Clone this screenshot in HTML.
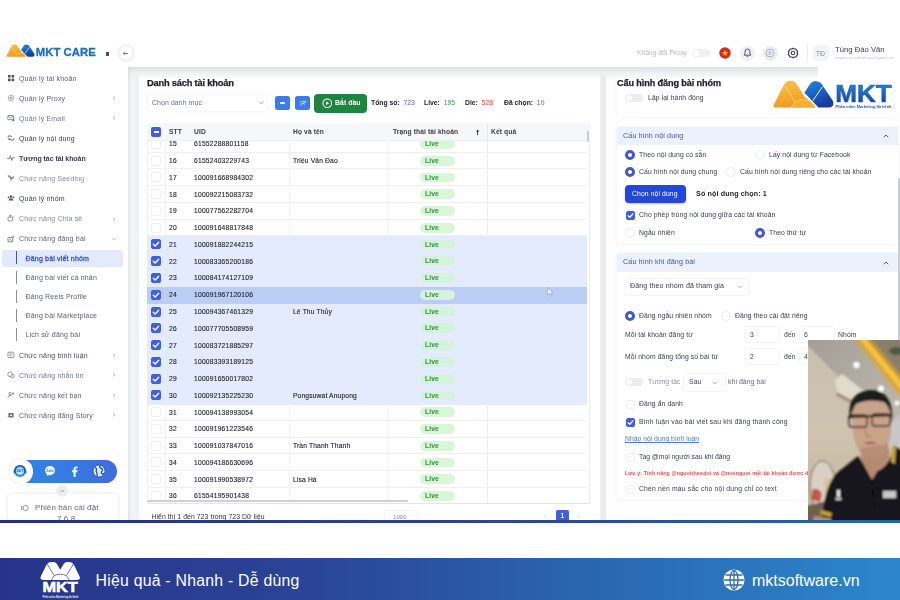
<!DOCTYPE html>
<html lang="vi">
<head>
<meta charset="utf-8">
<title>MKT Care</title>
<style>
*{box-sizing:border-box;margin:0;padding:0}
html,body{width:900px;height:600px;overflow:hidden;background:#fff;font-family:"Liberation Sans",sans-serif;color:#3a3f4a}
.abs,.app *{position:absolute}
.app{position:absolute;left:0;top:0;width:900px;height:521px;overflow:hidden;background:#f1f2f4;filter:blur(.45px)}
.t{white-space:nowrap;line-height:1;font-size:6.8px;letter-spacing:.1px;color:#3a3e48}
/* header */
.hdr{left:0;top:0;width:900px;height:67px;background:#fff}
.hshadow{left:128px;top:67px;width:772px;height:12px;background:linear-gradient(#dfe0e3,#eeeff1 45%,rgba(241,242,244,0))}
/* sidebar */
.side{left:0;top:0;width:128px;height:521px;background:#fff;box-shadow:1px 0 3px rgba(0,0,0,.08)}
.mi{left:19px;font-size:7px;letter-spacing:.18px;color:#555a66;white-space:nowrap;line-height:1}
.ic{left:7px;width:8px;height:8px}
.chev{left:112px;width:4px;height:4px}
.sub{left:25.5px;font-size:7px;letter-spacing:.18px;color:#5a5f6a;white-space:nowrap;line-height:1}
.vbar{left:16px;width:1px;background:#8b8f99}
/* cards */
.card{background:#fff;border-radius:3px}
.row{left:147px;width:439.5px;height:16.77px;border-bottom:1px solid #eef0f3}
.row.sel{background:#e4ebfd;border-bottom-color:#e4ebfd;height:17.3px}
.row.cur{background:#bacdf4;border-bottom-color:#bacdf4;height:17.3px}
.row span{position:absolute;white-space:nowrap;line-height:1;font-size:6.7px;letter-spacing:.22px;color:#23262e;top:5.5px;-webkit-text-stroke:.12px #23262e}
.row .cb{left:4px;top:3px;width:10px;height:10px;border:1px solid #eff0f3;border-radius:2px;background:#fff}
.row .cb.on{background:#3f5fe0;border-color:#3f5fe0}
.row .cb svg{left:-1px;top:-1px;width:10px;height:10px}
.row .c1{left:22px}
.row .c2{left:47px}
.row .c3{left:146px;letter-spacing:.15px}
.row .live{-webkit-text-stroke:0;left:273px;top:3.2px;width:35px;height:9.8px;border-radius:5px;background:#d9f7d6;color:#329040;text-align:left;padding-left:5px;font-size:6.8px;letter-spacing:.1px;line-height:9.8px;font-weight:bold}
.row.sel .live,.row.cur .live{background:#d5f3dc}
/* right */
.rad{width:10px;height:10px;border-radius:50%;border:1px solid #eceef2;background:#fff;margin:-.5px 0 0 -.5px}
.rad.on{border:3px solid #4358cc;background:#fff}
.cbx{width:9px;height:9px;border-radius:2px;border:1px solid #eceef2;background:#fff}
.cbx.on{background:#3f5fe0;border-color:#3f5fe0}
.cbx svg{left:-1px;top:-1px;width:9px;height:9px}
.inp{height:17px;border:1px solid #f4f5f7;border-radius:3px;background:#fff}
.tg{width:18px;height:8px;border-radius:4px;background:#ebecef}
.tg i{left:1px;top:1px;width:6px;height:6px;border-radius:50%;background:#fff}
/* footer */
.line{position:absolute;left:0;top:520px;width:900px;height:3px;background:linear-gradient(90deg,#25307c,#2a4a8c 60%,#2b66a6)}
.foot{position:absolute;left:0;top:558px;width:900px;height:42px;background:linear-gradient(90deg,#27348a 0%,#2a4597 35%,#2a66b0 65%,#2c86cc 100%)}
.foot .ft{position:absolute;color:#fff;font-size:15.5px;line-height:1;white-space:nowrap}
</style>
</head>
<body>
<div class="app">
<!-- left card -->
<div class="card" style="left:139px;top:72px;width:461px;height:460px"></div>
<div class="hshadow"></div>
<div class="t" style="left:147px;top:78.5px;font-size:9.3px;letter-spacing:-.2px;font-weight:bold;color:#1c1e24;-webkit-text-stroke:.25px #1c1e24">Danh sách tài khoản</div>
<div class="inp" style="left:147px;top:94px;width:121px;height:18px;border-color:#f8f8fa;box-shadow:0 0 2px rgba(0,0,0,.04)"></div>
<div class="t" style="left:152px;top:99.5px;font-size:6.9px;color:#6a6f7a">Chọn danh mục</div>
<svg style="left:258px;top:101px;width:6px;height:4px" viewBox="0 0 6 4"><path d="M.7.7 L3 3 L5.3.7" fill="none" stroke="#b4b7bf" stroke-width=".9"/></svg>
<div style="left:275px;top:96px;width:15px;height:14px;border-radius:2.5px;background:#3d7be6"></div>
<div style="left:280px;top:102px;width:5px;height:2px;border-radius:1px;background:#fff"></div>
<div style="left:295px;top:96px;width:15px;height:14px;border-radius:2.5px;background:#3d7be6"></div>
<svg style="left:298.5px;top:99px;width:8px;height:8px" viewBox="0 0 8 8"><path d="M1 3.2 Q4 .8 7 3.2 M2.2 5 Q4 3.6 5.8 5 M1.5 6.5 L6.5 2" fill="none" stroke="#dfe9ff" stroke-width=".8" stroke-linecap="round"/></svg>
<div style="left:314px;top:94px;width:53px;height:18.5px;border-radius:4px;background:#1e8540"></div>
<svg style="left:321.5px;top:98px;width:10.5px;height:10.5px" viewBox="0 0 9 9"><circle cx="4.5" cy="4.5" r="3.7" fill="none" stroke="#fff" stroke-width=".9"/><path d="M3.6 2.9 L6.2 4.5 L3.6 6.1Z" fill="#fff"/></svg>
<div class="t" style="left:335px;top:99.5px;color:#fff;font-weight:bold">Bắt đầu</div>
<div class="t" style="left:371px;top:99.5px;color:#23262e;font-weight:bold;letter-spacing:0">Tổng số: <span style="position:static;color:#4a63d8;font-weight:normal">&nbsp;723</span></div>
<div class="t" style="left:424px;top:99.5px;color:#23262e;font-weight:bold;letter-spacing:0">Live: <span style="position:static;color:#2a9a55;font-weight:normal">&nbsp;195</span></div>
<div class="t" style="left:465px;top:99.5px;color:#23262e;font-weight:bold;letter-spacing:0">Die: <span style="position:static;color:#e0423f;font-weight:normal">&nbsp;528</span></div>
<div class="t" style="left:504px;top:99.5px;color:#23262e;font-weight:bold;letter-spacing:0">Đã chọn: <span style="position:static;color:#4a63d8;font-weight:normal">&nbsp;10</span></div>
<!-- table -->
<div style="left:147px;top:123px;width:443px;height:386px;border:1px solid #eceef2;border-radius:3px;background:#fff"></div>
<div style="left:165px;top:141px;width:1px;height:362px;background:#f2f3f5"></div>
<div style="left:289px;top:141px;width:1px;height:362px;background:#f2f3f5"></div>
<div style="left:388px;top:141px;width:1px;height:362px;background:#f2f3f5"></div>
<div style="left:487px;top:141px;width:1px;height:362px;background:#eceef1"></div>
<div class="row" style="top:135.80px"><span class="cb"></span><span class="c1">15</span><span class="c2">61552288801158</span><span class="c3"></span><span class="live">Live</span></div>
<div class="row" style="top:152.57px"><span class="cb"></span><span class="c1">16</span><span class="c2">61552403229743</span><span class="c3">Triệu Văn Đao</span><span class="live">Live</span></div>
<div class="row" style="top:169.34px"><span class="cb"></span><span class="c1">17</span><span class="c2">100091668984302</span><span class="c3"></span><span class="live">Live</span></div>
<div class="row" style="top:186.11px"><span class="cb"></span><span class="c1">18</span><span class="c2">100092215083732</span><span class="c3"></span><span class="live">Live</span></div>
<div class="row" style="top:202.88px"><span class="cb"></span><span class="c1">19</span><span class="c2">100077562282704</span><span class="c3"></span><span class="live">Live</span></div>
<div class="row" style="top:219.65px"><span class="cb"></span><span class="c1">20</span><span class="c2">100091648817848</span><span class="c3"></span><span class="live">Live</span></div>
<div class="row sel" style="top:236.42px"><span class="cb on"><svg viewBox="0 0 10 10"><path d="M2.3 5.2 L4.2 7 L7.7 3.2" fill="none" stroke="#fff" stroke-width="1.4" stroke-linecap="round" stroke-linejoin="round"/></svg></span><span class="c1">21</span><span class="c2">100091882244215</span><span class="c3"></span><span class="live">Live</span></div>
<div class="row sel" style="top:253.19px"><span class="cb on"><svg viewBox="0 0 10 10"><path d="M2.3 5.2 L4.2 7 L7.7 3.2" fill="none" stroke="#fff" stroke-width="1.4" stroke-linecap="round" stroke-linejoin="round"/></svg></span><span class="c1">22</span><span class="c2">100083365200186</span><span class="c3"></span><span class="live">Live</span></div>
<div class="row sel" style="top:269.96px"><span class="cb on"><svg viewBox="0 0 10 10"><path d="M2.3 5.2 L4.2 7 L7.7 3.2" fill="none" stroke="#fff" stroke-width="1.4" stroke-linecap="round" stroke-linejoin="round"/></svg></span><span class="c1">23</span><span class="c2">100084174127109</span><span class="c3"></span><span class="live">Live</span></div>
<div class="row cur" style="top:286.73px"><span class="cb on"><svg viewBox="0 0 10 10"><path d="M2.3 5.2 L4.2 7 L7.7 3.2" fill="none" stroke="#fff" stroke-width="1.4" stroke-linecap="round" stroke-linejoin="round"/></svg></span><span class="c1">24</span><span class="c2">100091967120106</span><span class="c3"></span><span class="live">Live</span></div>
<div class="row sel" style="top:303.50px"><span class="cb on"><svg viewBox="0 0 10 10"><path d="M2.3 5.2 L4.2 7 L7.7 3.2" fill="none" stroke="#fff" stroke-width="1.4" stroke-linecap="round" stroke-linejoin="round"/></svg></span><span class="c1">25</span><span class="c2">100094367461329</span><span class="c3">Lê Thu Thủy</span><span class="live">Live</span></div>
<div class="row sel" style="top:320.27px"><span class="cb on"><svg viewBox="0 0 10 10"><path d="M2.3 5.2 L4.2 7 L7.7 3.2" fill="none" stroke="#fff" stroke-width="1.4" stroke-linecap="round" stroke-linejoin="round"/></svg></span><span class="c1">26</span><span class="c2">100077705508959</span><span class="c3"></span><span class="live">Live</span></div>
<div class="row sel" style="top:337.04px"><span class="cb on"><svg viewBox="0 0 10 10"><path d="M2.3 5.2 L4.2 7 L7.7 3.2" fill="none" stroke="#fff" stroke-width="1.4" stroke-linecap="round" stroke-linejoin="round"/></svg></span><span class="c1">27</span><span class="c2">100083721885297</span><span class="c3"></span><span class="live">Live</span></div>
<div class="row sel" style="top:353.81px"><span class="cb on"><svg viewBox="0 0 10 10"><path d="M2.3 5.2 L4.2 7 L7.7 3.2" fill="none" stroke="#fff" stroke-width="1.4" stroke-linecap="round" stroke-linejoin="round"/></svg></span><span class="c1">28</span><span class="c2">100083393189125</span><span class="c3"></span><span class="live">Live</span></div>
<div class="row sel" style="top:370.58px"><span class="cb on"><svg viewBox="0 0 10 10"><path d="M2.3 5.2 L4.2 7 L7.7 3.2" fill="none" stroke="#fff" stroke-width="1.4" stroke-linecap="round" stroke-linejoin="round"/></svg></span><span class="c1">29</span><span class="c2">100091650017802</span><span class="c3"></span><span class="live">Live</span></div>
<div class="row sel" style="top:387.35px"><span class="cb on"><svg viewBox="0 0 10 10"><path d="M2.3 5.2 L4.2 7 L7.7 3.2" fill="none" stroke="#fff" stroke-width="1.4" stroke-linecap="round" stroke-linejoin="round"/></svg></span><span class="c1">30</span><span class="c2">100092135225230</span><span class="c3">Pongsuwat Anupong</span><span class="live">Live</span></div>
<div class="row" style="top:404.12px"><span class="cb"></span><span class="c1">31</span><span class="c2">100094138993054</span><span class="c3"></span><span class="live">Live</span></div>
<div class="row" style="top:420.89px"><span class="cb"></span><span class="c1">32</span><span class="c2">100091961223546</span><span class="c3"></span><span class="live">Live</span></div>
<div class="row" style="top:437.66px"><span class="cb"></span><span class="c1">33</span><span class="c2">100091037847016</span><span class="c3">Trần Thanh Thanh</span><span class="live">Live</span></div>
<div class="row" style="top:454.43px"><span class="cb"></span><span class="c1">34</span><span class="c2">100094186630696</span><span class="c3"></span><span class="live">Live</span></div>
<div class="row" style="top:471.20px"><span class="cb"></span><span class="c1">35</span><span class="c2">100091990538972</span><span class="c3">Lisa Hà</span><span class="live">Live</span></div>
<div class="row" style="top:487.97px"><span class="cb"></span><span class="c1">36</span><span class="c2">61554195901438</span><span class="c3"></span><span class="live">Live</span></div>
<div style="left:147px;top:123px;width:443px;height:18px;background:#f6f7f9;border-radius:3px 3px 0 0;border-bottom:1px solid #eceef1"></div>
<div style="left:151px;top:127px;width:10px;height:10px;border-radius:2px;background:#3f5fe0"></div>
<div style="left:153.5px;top:131.3px;width:5px;height:1.4px;background:#fff"></div>
<div class="t" style="left:169px;top:129.3px;font-weight:bold;color:#3c404a;font-size:6.7px">STT</div>
<div class="t" style="left:194px;top:129.3px;font-weight:bold;color:#3c404a;font-size:6.7px">UID</div>
<div class="t" style="left:293px;top:129.3px;font-weight:bold;color:#3c404a;font-size:6.7px">Họ và tên</div>
<div class="t" style="left:393px;top:129.3px;font-weight:bold;color:#3c404a;font-size:6.7px">Trạng thái tài khoản</div>
<div class="t" style="left:475.5px;top:127.5px;font-weight:bold;color:#23262e;font-size:8.5px;-webkit-text-stroke:.4px #23262e">↑</div>
<div class="t" style="left:491px;top:129.3px;font-weight:bold;color:#3c404a;font-size:6.7px">Kết quả</div>
<div style="left:487px;top:123px;width:1px;height:18px;background:#e6e8ec"></div>
<div style="left:587px;top:131px;width:2px;height:11px;border-radius:1px;background:#c9cbd1"></div>
<svg style="left:547px;top:287px;width:7px;height:10px" viewBox="0 0 7 10"><path d="M.8.800 L.8 8 L2.600 6.400 L3.800 9.200 L5 8.700 L3.800 6 L6.200 6Z" fill="#fff" stroke="#8a93ad" stroke-width=".6" stroke-linejoin="round"/></svg>
<div style="left:147px;top:503px;width:443px;height:30px;background:#fff;border-top:1px solid #e4e6ea"></div>
<div style="left:147px;top:500.4px;width:261px;height:1.8px;background:#cfd1d6;border-radius:1px"></div>
<div class="t" style="left:151.5px;top:514px;color:#2c303a;font-size:6.8px">Hiển thị 1 đến 723 trong 723 Dữ liệu</div>
<div class="inp" style="left:384px;top:510px;width:34px;height:16px"></div>
<div class="t" style="left:393px;top:514px;color:#8b8f99;font-size:6px">1000</div>
<div class="t" style="left:544px;top:513px;color:#b5b8c0;font-size:6px">‹</div>
<div style="left:556px;top:510px;width:12.5px;height:12px;border-radius:2px;background:#3f5fe0"></div>
<div class="t" style="left:560.5px;top:513px;color:#fff;font-size:6.5px;font-weight:bold">1</div>
<div class="t" style="left:578px;top:513px;color:#b5b8c0;font-size:6px">›</div>
<!-- gap strip -->
<div style="left:600.5px;top:67px;width:5.5px;height:460px;background:#ececee"></div>
<!-- right panel -->
<div class="card" style="left:606px;top:67px;width:294px;height:460px;background:#fefefe;border-radius:0"></div>
<div class="card" style="left:616.5px;top:72px;width:281px;height:44.5px;box-shadow:0 0 3px rgba(0,0,0,.07)"></div>
<div class="hshadow" style="left:600px;width:218px"></div>
<div style="left:818px;top:67px;width:82px;height:47px;background:#fff"></div>
<div class="t" style="left:617px;top:78.5px;font-size:9.1px;letter-spacing:-.1px;font-weight:bold;color:#1c1e24;-webkit-text-stroke:.25px #1c1e24">Cấu hình đăng bài nhóm</div>
<div class="tg" style="left:625px;top:94px"><i></i></div>
<div class="t" style="left:648px;top:95px">Lặp lại hành động</div>
<!-- section 1 -->
<div class="card" style="left:616.5px;top:126.5px;width:281px;height:117.5px;box-shadow:0 0 3px rgba(0,0,0,.07)"></div>
<div style="left:616.5px;top:126.5px;width:281px;height:18px;background:#edf1fc;border-radius:3px 3px 0 0"></div>
<div class="t" style="left:623px;top:131.8px;font-size:7.2px;color:#4257b8">Cấu hình nội dung</div>
<svg style="left:883px;top:133.5px;width:6px;height:4px" viewBox="0 0 6 4"><path d="M.7 3.3 L3 1 L5.3 3.3" fill="none" stroke="#5a5f6a" stroke-width="1"/></svg>
<div class="rad on" style="left:625.5px;top:150.5px"></div><div class="t" style="left:639px;top:151.5px">Theo nội dung có sẵn</div>
<div class="rad" style="left:755.5px;top:150.5px"></div><div class="t" style="left:769px;top:151.5px">Lấy nội dung từ Facebook</div>
<div class="rad on" style="left:625.5px;top:167.5px"></div><div class="t" style="left:639px;top:168.5px">Cấu hình nội dung chung</div>
<div class="rad" style="left:726.5px;top:167.5px"></div><div class="t" style="left:740px;top:168.5px">Cấu hình nội dung riêng cho các tài khoản</div>
<div style="left:625px;top:185px;width:61px;height:18px;border-radius:4px;background:#2348d8;box-shadow:0 1px 2px rgba(35,72,216,.3)"></div>
<div class="t" style="left:632px;top:190.5px;color:#fff">Chọn nội dung</div>
<div class="t" style="left:696px;top:189.700px;color:#23262e;font-weight:bold;font-size:7.2px">Số nội dung chọn: 1</div>
<div class="cbx on" style="left:625.5px;top:210.5px"><svg viewBox="0 0 10 10"><path d="M2.3 5.2 L4.2 7 L7.7 3.2" fill="none" stroke="#fff" stroke-width="1.4" stroke-linecap="round" stroke-linejoin="round"/></svg></div>
<div class="t" style="left:639px;top:212.300px">Cho phép trùng nội dung giữa các tài khoản</div>
<div class="rad" style="left:625.5px;top:228.5px"></div><div class="t" style="left:639px;top:229.5px">Ngẫu nhiên</div>
<div class="rad on" style="left:755.5px;top:228.5px"></div><div class="t" style="left:769px;top:229.5px">Theo thứ tự</div>
<!-- section 2 -->
<div class="card" style="left:616.5px;top:253px;width:281px;height:247px;box-shadow:0 0 3px rgba(0,0,0,.07)"></div>
<div style="left:616.5px;top:253px;width:281px;height:19px;background:#edf1fc;border-radius:3px 3px 0 0"></div>
<div class="t" style="left:623px;top:258.3px;font-size:7.2px;color:#4257b8">Cấu hình khi đăng bài</div>
<svg style="left:883px;top:260.5px;width:6px;height:4px" viewBox="0 0 6 4"><path d="M.7 3.3 L3 1 L5.3 3.3" fill="none" stroke="#5a5f6a" stroke-width="1"/></svg>
<div class="inp" style="left:625px;top:278px;width:124px;height:18px"></div>
<div class="t" style="left:630px;top:283.3px;font-size:7.1px">Đăng theo nhóm đã tham gia</div>
<svg style="left:737px;top:285px;width:6px;height:4px" viewBox="0 0 6 4"><path d="M.7.7 L3 3 L5.3.7" fill="none" stroke="#b4b7bf" stroke-width=".8"/></svg>
<div class="rad on" style="left:625.5px;top:311.5px"></div><div class="t" style="left:639px;top:312.5px">Đăng ngẫu nhiên nhóm</div>
<div class="rad" style="left:721.5px;top:311.5px"></div><div class="t" style="left:735px;top:312.5px">Đăng theo cài đặt riêng</div>
<div class="t" style="left:625px;top:332px">Mỗi tài khoản đăng từ</div>
<div class="inp" style="left:744px;top:326px;width:36px"></div><div class="t" style="left:750px;top:332px">3</div>
<div class="t" style="left:784px;top:332px">đến</div>
<div class="inp" style="left:799px;top:326px;width:36px"></div><div class="t" style="left:804px;top:332px">6</div>
<div class="t" style="left:838px;top:332px">Nhóm</div>
<div class="t" style="left:625px;top:354px">Mỗi nhóm đăng tổng số bài từ</div>
<div class="inp" style="left:744px;top:348px;width:36px"></div><div class="t" style="left:750px;top:354px">2</div>
<div class="t" style="left:784px;top:354px">đến</div>
<div class="inp" style="left:799px;top:348px;width:36px"></div><div class="t" style="left:804px;top:354px">4</div>
<div class="tg" style="left:625px;top:378px"><i></i></div>
<div class="t" style="left:648px;top:379px;color:#8d919b">Tương tác</div>
<div class="inp" style="left:683px;top:373px;width:43px;height:19px"></div>
<div class="t" style="left:689px;top:379px">Sau</div>
<svg style="left:712px;top:380.5px;width:6px;height:4px" viewBox="0 0 6 4"><path d="M.7.7 L3 3 L5.3.7" fill="none" stroke="#b4b7bf" stroke-width=".8"/></svg>
<div class="t" style="left:728px;top:379px;color:#6a6e78">khi đăng bài</div>
<div class="cbx" style="left:625.5px;top:399.5px"></div><div class="t" style="left:639px;top:400.5px">Đăng ẩn danh</div>
<div class="cbx on" style="left:625.5px;top:417.5px"><svg viewBox="0 0 10 10"><path d="M2.3 5.2 L4.2 7 L7.7 3.2" fill="none" stroke="#fff" stroke-width="1.4" stroke-linecap="round" stroke-linejoin="round"/></svg></div>
<div class="t" style="left:639px;top:418.7px;letter-spacing:.17px">Bình luận vào bài viết sau khi đăng thành công</div>
<div class="t" style="left:625px;top:436px;color:#4a7fd0;letter-spacing:0;text-decoration:underline">Nhập nội dung bình luận</div>
<div class="cbx" style="left:625.5px;top:452.5px"></div><div class="t" style="left:639px;top:453.5px;letter-spacing:0">Tag @mọi người sau khi đăng</div>
<div class="t" style="left:625px;top:470.5px;color:#e2504c;font-weight:bold;font-size:5.3px">Lưu ý: Tính năng @nguoitheodoi và @moinguoi mỗi tài khoản được dùng 1 lần/ngày</div>
<div class="cbx" style="left:625.5px;top:484.5px"></div><div class="t" style="left:639px;top:485.5px;letter-spacing:.18px">Chèn nền màu sắc cho nội dung chỉ có text</div>
<div style="left:897.5px;top:178px;width:2.5px;height:170px;background:#cdced2;border-radius:1px"></div>
<svg style="left:770px;top:78px;width:126px;height:34px" viewBox="0 0 126 34">
<defs>
<linearGradient id="ly" x1="0" y1="0" x2=".3" y2="1"><stop offset="0" stop-color="#f8c444"/><stop offset=".55" stop-color="#f5ae30"/><stop offset="1" stop-color="#f09a22"/></linearGradient>
<linearGradient id="lb" x1="0" y1="0" x2=".5" y2="1"><stop offset="0" stop-color="#1f8fe0"/><stop offset=".5" stop-color="#1b62c4"/><stop offset="1" stop-color="#1a3a9c"/></linearGradient>
<linearGradient id="lt" x1="0" y1="0" x2="0" y2="1"><stop offset="0" stop-color="#2590dc"/><stop offset=".5" stop-color="#1d64bc"/><stop offset="1" stop-color="#1a3a98"/></linearGradient>
</defs>
<path d="M5.500 29.600 Q2.400 29.600 3.800 26.400 L14.200 6.200 Q17 2.200 21.200 2.800 Q24.500 3 26.400 5.600 L35 19.400 Q41 22 45.200 29.600Z" fill="url(#ly)"/>
<path d="M21.200 29.600 Q24 21.600 33.200 21.600 Q42 21.600 45.200 29.600Z" fill="#f5ad32"/>
<path d="M21.200 29.600 Q24 21.600 33.200 21.600 Q40 21.600 43.600 26.600 M15.200 8 L24.600 23.400" stroke="#fbd98a" stroke-width=".9" fill="none"/>
<path d="M34.400 14.800 L40 6 Q42.600 2.600 46.400 3.200 L49 4 Q50.600 4.600 51.600 6 L62.600 22.600 Q64.600 26.400 62 28.600 Q61 29.400 59.600 29.400 L48.400 29.400Z" fill="url(#lb)"/>
<path d="M52.400 8.800 L42.800 22.800" stroke="#eef5ff" stroke-width="1" fill="none"/>
<text x="65.300" y="23.600" font-family="Liberation Sans, sans-serif" font-weight="bold" font-size="23" fill="url(#lt)" stroke="#1d5cb8" stroke-width=".5" textLength="56.500" lengthAdjust="spacingAndGlyphs">MKT</text>
<text x="65.500" y="29.900" font-family="Liberation Sans, sans-serif" font-weight="bold" font-size="3.900" fill="#2358b4" textLength="56" lengthAdjust="spacingAndGlyphs">Phần mềm Marketing đa kênh</text>
</svg>

<svg style="left:808px;top:340px;width:92px;height:181px" viewBox="0 0 92 181">
<defs>
<filter id="bl" x="-10%" y="-10%" width="120%" height="120%"><feGaussianBlur stdDeviation="1.1"/></filter>
<filter id="bl2" x="-20%" y="-20%" width="140%" height="140%"><feGaussianBlur stdDeviation="2.2"/></filter>
<linearGradient id="wall" x1="0" y1="0" x2="0" y2="1"><stop offset="0" stop-color="#c9bfb0"/><stop offset=".5" stop-color="#cfc4b0"/><stop offset="1" stop-color="#c2b49c"/></linearGradient>
<linearGradient id="ceil" x1="0" y1="0" x2="1" y2="1"><stop offset="0" stop-color="#a29d96"/><stop offset=".6" stop-color="#b6b0a8"/><stop offset="1" stop-color="#c2bdb6"/></linearGradient>
<clipPath id="cc"><rect x="0" y="0" width="92" height="181"/></clipPath>
</defs>
<g clip-path="url(#cc)">
<rect x="0" y="0" width="92" height="181" fill="url(#wall)"/>
<g filter="url(#bl)">
<path d="M-4 -4 L96 -4 L96 120 L60 70 L34 40 L-4 2Z" fill="url(#ceil)"/>
<path d="M54 -4 L96 -4 L96 50Z" fill="#8a7d6c"/>
<ellipse cx="88" cy="11" rx="7" ry="4" fill="#4c5a48"/>
<path d="M27 40 L34 34 L60 54 L58 68 L29 52Z" fill="#e2dacb"/>
<path d="M29 52 L58 68 L57 71.500 L28 55.500Z" fill="#a09480"/>
<path d="M76 90 L96 70 L96 130 L80 130Z" fill="#c8c6c6"/>
</g>
<g filter="url(#bl2)"><path d="M46 -3 L60 -3 L96 40 L96 60Z" fill="#e2a624"/></g>
<g filter="url(#bl)"><path d="M50 -3 L56 -3 L96 45 L96 54Z" fill="#f2c248"/>
<circle cx="48.500" cy="25" r="3.200" fill="#fff"/><circle cx="73" cy="48.500" r="3" fill="#fff"/><circle cx="89" cy="63" r="2.600" fill="#f6f6f6"/>
<!-- mirror -->
<ellipse cx="14.500" cy="146" rx="12.500" ry="25" fill="#d9d1c5" stroke="#6a5a48" stroke-width="1"/>
<path d="M4 150 Q10 146 14 154 L12 162 L4 160Z" fill="#c05a48"/>
<rect x="16" y="138" width="8" height="16" fill="#d8c2a0"/>
<path d="M-2 166 L30 158 L30 185 L-2 185Z" fill="#6e5e4c"/>
<!-- neck/face -->
<path d="M44 78 Q42 58 62 56 Q84 56 83 82 Q84 104 74 114 Q64 122 54 114 Q44 104 44 78Z" fill="#c9a28a"/>
<path d="M52 108 L80 104 L84 128 L56 132Z" fill="#b88e76"/>
<!-- hair -->
<path d="M42 80 Q38 52 62 50 Q86 50 84 82 Q82 66 76 62 Q60 58 48 64 Q44 70 42 80Z" fill="#1c1a1a"/>
<!-- glasses -->
<path d="M40 76 L84 74 L84 76.200 L40 78.200Z" fill="#2a2624"/>
<rect x="41" y="75" width="18" height="12" rx="3" fill="none" stroke="#2a2624" stroke-width="1.300"/>
<rect x="64" y="74" width="18" height="12" rx="3" fill="none" stroke="#2a2624" stroke-width="1.300"/>
<path d="M56 103 Q62 100 69 103 Q62 106 56 103Z" fill="#9a6a5e"/>
<path d="M58 88 Q56 96 62 97" fill="none" stroke="#a8806c" stroke-width="1.200"/>
<!-- shirt -->
<path d="M50 116 Q40 124 30 132 Q18 142 14 176 L12 185 L96 185 L96 112 L86 106 Q84 122 72 130 Q60 132 50 116Z" fill="#17171b"/>
<path d="M51 116 L64 140 L82 110 L70 118 L58 118Z" fill="#b48a72"/>
<path d="M84 106 L88 108 L87 124 L83 122Z" fill="#c9a23a"/>
<path d="M13 170 L24 173 L23 177 L12 174Z" fill="#c9a23a"/>
<path d="M6 176 L22 178 L26 185 L4 185Z" fill="#b88e76"/>
<rect x="29" y="150" width="3" height="7" fill="#e8e8e8"/>
<rect x="27.500" y="158" width="6" height="2" fill="#cfcfcf"/>
<rect x="75" y="151" width="13" height="7" fill="#c8c8c8"/>
<path d="M64 140 L66 166" stroke="#0c0c0e" stroke-width="1.200"/>
</g>
</g>
</svg>


<div class="side"></div>
<div style="left:2px;top:249.5px;width:121px;height:17px;border-radius:3px;background:#e3eafb"></div>
<svg class="ic" style="top:73.8px" viewBox="0 0 8 8"><rect x="1" y="1" width="2.6" height="2.6" rx=".5" fill="#4a5060"/><rect x="4.6" y="1" width="2.6" height="2.6" rx=".5" fill="#4a5060"/><rect x="1" y="4.6" width="2.6" height="2.6" rx=".5" fill="#4a5060"/><rect x="4.6" y="4.6" width="2.6" height="2.6" rx=".5" fill="#4a5060"/></svg>
<div class="mi" style="top:74.7px;color:#5e6370">Quản lý tài khoản</div>
<svg class="ic" style="top:93.8px" viewBox="0 0 8 8"><circle cx="4" cy="4" r="2.7" fill="none" stroke="#666b78" stroke-width=".9" stroke-dasharray="1.4 .7"/><circle cx="4" cy="4" r="1" fill="none" stroke="#666b78" stroke-width=".7"/></svg>
<div class="mi" style="top:94.7px;color:#5e6370">Quản lý Proxy</div>
<svg class="chev" style="top:96.0px" viewBox="0 0 4 4"><path d="M1.2.6 L2.8 2 L1.2 3.4" fill="none" stroke="#8b8f99" stroke-width=".7"/></svg>
<svg class="ic" style="top:113.8px" viewBox="0 0 8 8"><rect x=".8" y="1.5" width="5.6" height="4.2" rx=".8" fill="none" stroke="#666b78" stroke-width=".8"/><path d="M1 2 L3.6 4 L6.2 2" fill="none" stroke="#666b78" stroke-width=".7"/><circle cx="6.3" cy="6.2" r="1.1" fill="#666b78"/></svg>
<div class="mi" style="top:114.7px;color:#737884">Quản lý Email</div>
<svg class="chev" style="top:116.0px" viewBox="0 0 4 4"><path d="M1.2.6 L2.8 2 L1.2 3.4" fill="none" stroke="#8b8f99" stroke-width=".7"/></svg>
<svg class="ic" style="top:133.8px" viewBox="0 0 8 8"><path d="M1 3.2 Q1 1.2 3 1.8 L4.5 2.6 M7 4.8 Q7 6.8 5 6.2 L3.5 5.4" fill="none" stroke="#666b78" stroke-width="1" stroke-linecap="round"/><circle cx="2.2" cy="5.2" r=".9" fill="#666b78"/></svg>
<div class="mi" style="top:134.7px;color:#3a3f4a">Quản lý nội dung</div>
<svg class="ic" style="top:153.8px" viewBox="0 0 8 8"><path d="M.6 4.5 L2.4 4.5 L3.4 1.8 L4.8 6.4 L5.6 3.8 L7.4 3.8" fill="none" stroke="#666b78" stroke-width=".85" stroke-linejoin="round" stroke-linecap="round"/></svg>
<div class="mi" style="top:154.7px;color:#3a3f4a;font-weight:bold;letter-spacing:-.05px">Tương tác tài khoản</div>
<svg class="ic" style="top:173.8px" viewBox="0 0 8 8"><path d="M4 7.2 V3.6 M4 4 Q1.4 4 1.2 1.6 Q3.8 1.6 4 4 M4 5 Q6.4 5 6.8 2.8 Q4.4 2.8 4 5" fill="none" stroke="#666b78" stroke-width=".8" stroke-linejoin="round"/></svg>
<div class="mi" style="top:174.7px;color:#8a8e98">Chức năng Seeding</div>
<svg class="ic" style="top:193.8px" viewBox="0 0 8 8"><circle cx="4" cy="2.6" r="1.3" fill="#555a66"/><path d="M1.6 6.6 Q1.6 4.3 4 4.3 Q6.4 4.3 6.4 6.6Z" fill="#555a66"/><circle cx="1.5" cy="3.4" r=".9" fill="#555a66"/><circle cx="6.5" cy="3.4" r=".9" fill="#555a66"/></svg>
<div class="mi" style="top:194.7px;color:#3a3f4a">Quản lý nhóm</div>
<svg class="ic" style="top:214.3px" viewBox="0 0 8 8"><rect x="1" y="3" width="4.6" height="4" rx=".8" fill="none" stroke="#777c88" stroke-width=".8"/><path d="M3.4 3 V1 M2.2 2 L3.4 .8 L4.6 2 M6 2.2 L7.2 3.4" fill="none" stroke="#777c88" stroke-width=".7"/></svg>
<div class="mi" style="top:215.2px;color:#858993">Chức năng Chia sẻ</div>
<svg class="chev" style="top:216.5px" viewBox="0 0 4 4"><path d="M1.2.6 L2.8 2 L1.2 3.4" fill="none" stroke="#8b8f99" stroke-width=".7"/></svg>
<svg class="ic" style="top:234.5px" viewBox="0 0 8 8"><rect x="1" y="2.4" width="4.8" height="4.4" rx=".8" fill="none" stroke="#666b78" stroke-width=".85"/><path d="M2.2 5.4 L3.3 4.2 L4.6 5.6 M5.4 1 L7 2.6 M7 1 L5.4 2.6" fill="none" stroke="#666b78" stroke-width=".7"/></svg>
<div class="mi" style="top:235.4px;color:#5e6370">Chức năng đăng bài</div>
<svg class="chev" style="top:236.7px" viewBox="0 0 4 4"><path d="M.6 1.2 L2 2.8 L3.4 1.2" fill="none" stroke="#8b8f99" stroke-width=".7"/></svg>
<svg class="ic" style="top:350.8px" viewBox="0 0 8 8"><rect x=".9" y="1.2" width="6" height="5.4" rx="1" fill="none" stroke="#777c88" stroke-width=".8"/><path d="M2.2 3 H5.6 M2.2 4.6 H4.6" stroke="#777c88" stroke-width=".7"/></svg>
<div class="mi" style="top:351.7px;color:#4a4f5c">Chức năng bình luận</div>
<svg class="chev" style="top:353.0px" viewBox="0 0 4 4"><path d="M1.2.6 L2.8 2 L1.2 3.4" fill="none" stroke="#8b8f99" stroke-width=".7"/></svg>
<svg class="ic" style="top:370.8px" viewBox="0 0 8 8"><circle cx="3.2" cy="3.4" r="2.4" fill="none" stroke="#777c88" stroke-width=".8"/><circle cx="5.6" cy="5.2" r="1.7" fill="#fff" stroke="#777c88" stroke-width=".8"/></svg>
<div class="mi" style="top:371.7px;color:#737884">Chức năng nhắn tin</div>
<svg class="chev" style="top:373.0px" viewBox="0 0 4 4"><path d="M1.2.6 L2.8 2 L1.2 3.4" fill="none" stroke="#8b8f99" stroke-width=".7"/></svg>
<svg class="ic" style="top:390.8px" viewBox="0 0 8 8"><circle cx="3" cy="2.6" r="1.2" fill="none" stroke="#777c88" stroke-width=".8"/><path d="M1 6.8 Q1 4.4 3 4.4 Q4.4 4.4 4.8 5.4 M6 1.4 V4 M4.8 2.7 H7.2" fill="none" stroke="#777c88" stroke-width=".8"/></svg>
<div class="mi" style="top:391.7px;color:#5e6370">Chức năng kết bạn</div>
<svg class="chev" style="top:393.0px" viewBox="0 0 4 4"><path d="M1.2.6 L2.8 2 L1.2 3.4" fill="none" stroke="#8b8f99" stroke-width=".7"/></svg>
<svg class="ic" style="top:410.8px" viewBox="0 0 8 8"><rect x="1.6" y="2" width="5" height="4.6" rx=".8" fill="#666b78"/><path d="M.8 3 H2 M.8 5.6 H2" stroke="#666b78" stroke-width=".8"/><circle cx="4.1" cy="4.3" r="1" fill="#fff"/></svg>
<div class="mi" style="top:411.7px;color:#5e6370">Chức năng đăng Story</div>
<svg class="chev" style="top:413.0px" viewBox="0 0 4 4"><path d="M1.2.6 L2.8 2 L1.2 3.4" fill="none" stroke="#8b8f99" stroke-width=".7"/></svg>
<div class="vbar" style="top:251.2px;height:13px;background:#3d55c8;width:1.3px"></div>
<div class="sub" style="top:254.5px;color:#3d55c8;-webkit-text-stroke:.3px #3d55c8">Đăng bài viết nhóm</div>
<div class="vbar" style="top:270.5px;height:13px"></div>
<div class="sub" style="top:273.8px">Đăng bài viết cá nhân</div>
<div class="vbar" style="top:289.5px;height:13px"></div>
<div class="sub" style="top:292.8px">Đăng Reels Profile</div>
<div class="vbar" style="top:308.5px;height:13px"></div>
<div class="sub" style="top:311.8px">Đăng bài Marketplace</div>
<div class="vbar" style="top:327.5px;height:13px"></div>
<div class="sub" style="top:330.8px">Lịch sử đăng bài</div>
<div style="left:11px;top:460px;width:106px;height:23px;border-radius:12px;background:linear-gradient(90deg,#3186e6,#3a78e2 55%,#3f6cda)"></div>
<div style="left:9px;top:459px;width:24px;height:25px;border-radius:12px;background:#fff;box-shadow:0 0 2px rgba(0,0,0,.15)"></div>
<svg style="left:12px;top:463px;width:16px;height:16px" viewBox="0 0 16 16"><circle cx="8" cy="8" r="6" fill="#2f8ee8"/><circle cx="8" cy="8" r="3.8" fill="#bfe0ff"/><path d="M2.6 8 A5.4 5.4 0 0 1 13.4 8" fill="none" stroke="#1c5fb8" stroke-width="1.4"/><rect x="1.6" y="7" width="2.2" height="3.6" rx="1" fill="#1c5fb8"/><rect x="12.2" y="7" width="2.2" height="3.6" rx="1" fill="#1c5fb8"/><text x="8" y="9.4" font-size="3.4" font-weight="bold" text-anchor="middle" fill="#1c5fb8" font-family="Liberation Sans, sans-serif">24/7</text></svg>
<svg style="left:44px;top:465px;width:12px;height:12px" viewBox="0 0 12 12"><path d="M6 1 C3 1 1 3 1 5.6 C1 7 1.7 8.2 2.8 9 V11 L4.7 10 C5.1 10.1 5.5 10.2 6 10.2 C9 10.2 11 8.2 11 5.6 C11 3 9 1 6 1Z" fill="#e8f3ff"/><text x="6" y="7.2" font-size="3.6" font-weight="bold" text-anchor="middle" fill="#2f7de0" font-family="Liberation Sans, sans-serif">Zalo</text></svg>
<svg style="left:68px;top:464px;width:14px;height:14px" viewBox="0 0 14 14"><circle cx="7" cy="7" r="6.4" fill="#2f7de8"/><path d="M7.6 13 V8.2 H9.2 L9.5 6.3 H7.6 V5.2 C7.6 4.6 7.8 4.2 8.6 4.2 H9.6 V2.5 C9.4 2.5 8.8 2.4 8.1 2.4 C6.6 2.4 5.6 3.3 5.6 5 V6.3 H4 V8.2 H5.6 V13Z" fill="#fff"/></svg>
<svg style="left:92px;top:464px;width:14px;height:14px" viewBox="0 0 14 14"><circle cx="7" cy="7" r="6" fill="#dcecff"/><path d="M3 3.4 Q5 4.4 4.6 6 Q3.4 7.4 4.8 8.6 Q5.6 10.2 4.8 12 M8 1.4 Q7.2 3.4 9 4.4 Q11 4.6 10.2 6.8 Q8.6 8 9.6 9.6 Q11 10.4 12.2 9.6" fill="none" stroke="#1f4fa8" stroke-width="1.3"/><circle cx="7" cy="7" r="6" fill="none" stroke="#274a9a" stroke-width=".8"/></svg>
<div style="left:8px;top:494px;width:110px;height:35px;border-radius:4px;background:#fff;box-shadow:0 0 4px rgba(0,0,0,.10)"></div>
<div style="left:56px;top:485px;width:12px;height:12px;border-radius:50%;background:#eceef2"></div>
<svg style="left:59.5px;top:489px;width:5px;height:4px" viewBox="0 0 5 4"><path d="M.8 3 L2.5 1 L4.2 3" fill="none" stroke="#8b8f99" stroke-width=".8"/></svg>
<svg style="left:21px;top:504px;width:8px;height:8px" viewBox="0 0 8 8"><circle cx="4.6" cy="4" r="2.6" fill="none" stroke="#777c88" stroke-width=".8"/><path d="M.8 2 V6" stroke="#777c88" stroke-width=".8"/></svg>
<div class="t" style="left:35px;top:504px;font-size:8px;color:#666b78">Phiên bản cài đặt</div>
<div class="t" style="left:57px;top:514.5px;font-size:8px;color:#666b78">7.6.8</div>
<div class="hdr" style="left:128px;width:772px"></div>
<div style="left:0;top:0;width:128px;height:67px;background:#fff"></div>
<!-- logo mkt care -->
<svg style="left:5.500px;top:43.800px;width:29.500px;height:13.200px" viewBox="2 2 63.500 28.500" preserveAspectRatio="none">
<defs><linearGradient id="gy" x1="0" y1="0" x2=".3" y2="1"><stop offset="0" stop-color="#f8c444"/><stop offset="1" stop-color="#f09a22"/></linearGradient>
<linearGradient id="gb" x1="0" y1="0" x2=".5" y2="1"><stop offset="0" stop-color="#1f8fe0"/><stop offset="1" stop-color="#1a3a9c"/></linearGradient></defs>
<path d="M5.500 29.600 Q2.400 29.600 3.800 26.400 L14.200 6.200 Q17 2.200 21.200 2.800 Q24.500 3 26.400 5.600 L35 19.400 Q41 22 45.200 29.600Z" fill="url(#gy)"/>
<path d="M21.200 29.600 Q24 21.600 33.200 21.600 Q40 21.600 43.600 26.600 M15.200 8 L24.600 23.400" stroke="#fbd98a" stroke-width="1.200" fill="none"/>
<path d="M34.400 14.800 L40 6 Q42.600 2.600 46.400 3.200 L49 4 Q50.600 4.600 51.600 6 L62.600 22.600 Q64.600 26.400 62 28.600 Q61 29.400 59.600 29.400 L48.400 29.400Z" fill="url(#gb)"/>
<path d="M52.400 8.800 L42.800 22.800" stroke="#eef5ff" stroke-width="1.400" fill="none"/>
</svg>
<div class="t" style="left:35.800px;top:47.300px;font-size:11.300px;font-weight:bold;color:#1d6fbe;letter-spacing:.05px;-webkit-text-stroke:.3px #1d6fbe">MKT CARE</div>
<div style="left:105.5px;top:52px;width:3px;height:3.5px;background:#4a4f5c"></div>
<div style="left:118.5px;top:46px;width:14px;height:14px;border-radius:50%;background:#fff;box-shadow:0 0 3px rgba(0,0,0,.22)"></div>
<svg style="left:122px;top:50.5px;width:7px;height:5px" viewBox="0 0 7 5"><path d="M6 2.5 H1.2 M2.8 1 L1.2 2.5 L2.8 4" fill="none" stroke="#555a66" stroke-width=".8"/></svg>
<!-- right -->
<div class="t" style="left:637px;top:49.8px;color:#b4b7be;font-size:6.6px">Không đổi Proxy</div>
<div class="tg" style="left:691.500px;top:49px;background:#f0f0f3"><i></i></div>
<svg style="left:718.500px;top:47px;width:12px;height:12px" viewBox="0 0 13 13"><circle cx="6.500" cy="6.500" r="6.200" fill="#d8281f"/><path d="M6.500 3 L7.400 5.500 L10 5.500 L7.900 7.100 L8.700 9.600 L6.500 8.100 L4.300 9.600 L5.100 7.100 L3 5.500 L5.600 5.500Z" fill="#f6c93a"/></svg>
<div style="left:740px;top:45.500px;width:15px;height:15px;border-radius:50%;background:#eef0f5"></div>
<svg style="left:743px;top:48px;width:9px;height:10px" viewBox="0 0 9 10"><path d="M4.5 1 Q7 1 7 4 V6 L7.8 7.2 H1.2 L2 6 V4 Q2 1 4.5 1Z M3.6 8.2 Q4.5 9.2 5.4 8.2" fill="none" stroke="#3a3f4a" stroke-width=".85" stroke-linejoin="round"/></svg>
<div style="left:762.5px;top:45.5px;width:15px;height:15px;border-radius:50%;background:#ebedf3"></div>
<svg style="left:765px;top:48px;width:10px;height:10px" viewBox="0 0 10 10"><circle cx="5" cy="5" r="4" fill="none" stroke="#a0a5ba" stroke-width=".8"/><path d="M4.1 3.3 L6.6 5 L4.1 6.7Z" fill="none" stroke="#a0a5ba" stroke-width=".7"/></svg>
<svg style="left:786.500px;top:47px;width:12px;height:12px" viewBox="0 0 12 12"><path d="M6 1.200 L7.300 2 L8.900 2 L9.600 3.400 L10.600 4.400 L10.200 6 L10.600 7.600 L9.600 8.600 L8.900 10 L7.300 10 L6 10.800 L4.700 10 L3.100 10 L2.400 8.600 L1.400 7.600 L1.800 6 L1.400 4.400 L2.400 3.400 L3.100 2 L4.700 2Z" fill="none" stroke="#3a3f4a" stroke-width="1.200" stroke-linejoin="round"/><circle cx="6" cy="6" r="1.800" fill="none" stroke="#3a3f4a" stroke-width="1.100"/></svg>
<div style="left:807px;top:44px;width:1px;height:19px;background:#eceef2"></div>
<div style="left:812.500px;top:45px;width:16px;height:16px;border-radius:5px;background:#f3f4f6"></div>
<div class="t" style="left:815.800px;top:49.500px;font-size:7px;color:#8a8e98;letter-spacing:0">TĐ</div>
<div class="t" style="left:835px;top:46px;font-size:7.7px;letter-spacing:0;color:#3a3f4a">Tùng Đào Văn</div>
<div class="t" style="left:835px;top:57px;font-size:3.4px;color:#c0c3ca">tungdaovan.mktsoftware@gmail.com</div>

</div>
<div class="line"></div>
<div class="foot">
<svg style="position:absolute;left:39px;top:3px;width:43px;height:39px" viewBox="0 0 43 39">
<path d="M4 18.900 Q.600 18.900 1.800 15.600 L7.600 3.600 Q9 1 12 1 L14.500 1 Q16.500 1 17.800 2.800 L21.300 8.800 L24.800 2.800 Q26 1 28.200 1 L30.500 1 Q33.500 1 34.800 3.600 L40.600 15.600 Q41.800 18.900 38.400 18.900Z" fill="#fff"/>
<path d="M8.200 3 L15.200 14.600 M34.400 3 L27.400 14.600 M12.600 19 Q14 13.200 21.300 13.200 Q28.600 13.200 30 19" stroke="#2b3a8e" stroke-width=".7" fill="none"/>
<text x="3.400" y="31.300" font-family="Liberation Sans, sans-serif" font-weight="bold" font-size="14.100" fill="#fff" stroke="#fff" stroke-width=".55" textLength="35.400" lengthAdjust="spacingAndGlyphs">MKT</text>
<text x="3.400" y="36.800" font-family="Liberation Sans, sans-serif" font-weight="bold" font-size="2.700" fill="#e8ecff" textLength="36" lengthAdjust="spacingAndGlyphs">Phần mềm Marketing đa kênh</text>
</svg>
<div class="ft" style="left:95.5px;top:15.2px;font-size:15.8px;letter-spacing:.25px">Hiệu quả - Nhanh - Dễ dùng</div>
<svg style="position:absolute;left:723px;top:11px;width:22px;height:22px" viewBox="0 0 22 22"><circle cx="11" cy="11" r="10.5" fill="#fff"/><g fill="none" stroke="#2b6ab4" stroke-width="1.3"><ellipse cx="11" cy="11" rx="4" ry="9.6"/><path d="M11 1 V21 M1.2 11 H20.8 M2.6 6 H19.4 M2.6 16 H19.4"/></g></svg>
<div class="ft" style="left:752px;top:14.8px;font-size:16px">mktsoftware.vn</div>

</div>
</body>
</html>
